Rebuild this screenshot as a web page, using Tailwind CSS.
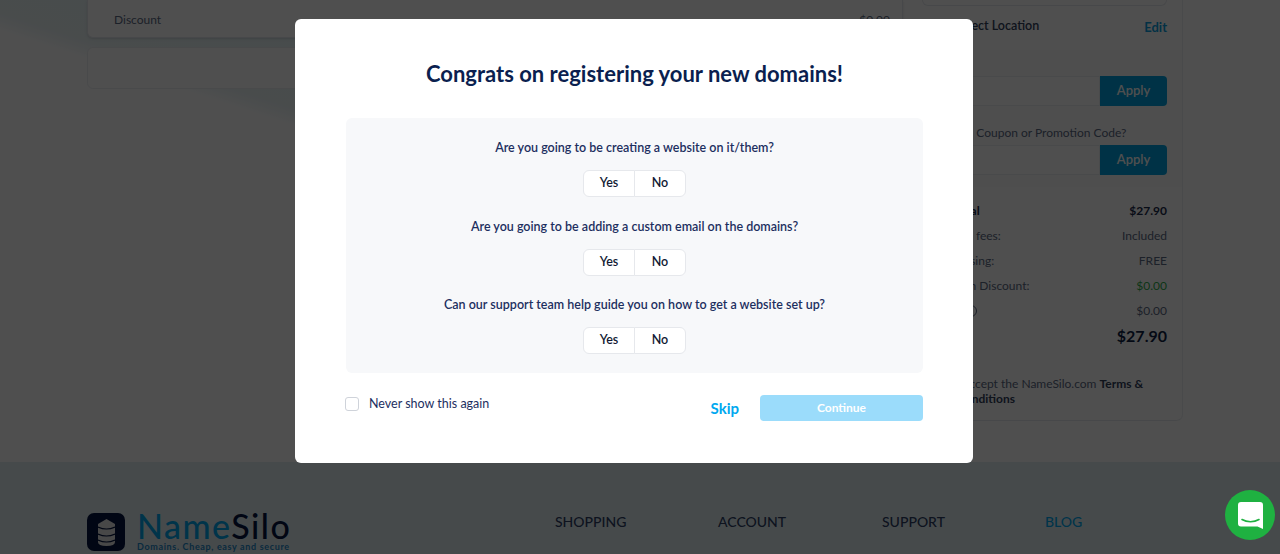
<!DOCTYPE html>
<html lang="en">

<head>
 <meta charset="UTF-8">
 <meta name="viewport" content="width=device-width, initial-scale=1.0">
 <title>NameSilo - Order</title>
 <script src="https://cdn.jsdelivr.net/npm/@tailwindcss/browser@4"></script>
</head>

<body class="relative h-[554px] overflow-hidden bg-white font-['Lato',sans-serif]">

 <!-- page behind the modal -->
 <div class="flex h-[462px] bg-[linear-gradient(198deg,#e6f4f7_0%,#eaf4f6_46%,#ffffff_54%)] bg-[length:295px_140px] bg-no-repeat pl-[87px]">
  <div class="flex w-[816px] flex-col gap-[9px]">
   <div class="flex h-[38px] justify-between rounded-b-md border border-t-0 border-[#e6e9ee] bg-white pl-[26px] pr-[12px] pt-[11px] text-[12px] text-[#5c6a84] shadow-sm">
    <span>Discount</span>
    <span>$0.00</span>
   </div>
   <div class="h-[42px] rounded-md border border-[#eceff3] bg-white"></div>
  </div>

  <div class="ml-[19px] flex h-[421px] w-[261px] flex-col rounded-br-md border-r border-[#eceff3]">
   <div class="mr-[15px] h-[6px] rounded-b-md border border-t-0 border-[#e6e9ee]"></div>
   <div class="flex h-[44px] items-start justify-between pl-[33px] pr-[15px] pt-[11px] text-[#33415c]">
    <span class="text-[12.5px] font-semibold">Select Location</span>
    <span class="mt-[1px] text-[13px] font-bold text-[#0a9fe0]">Edit</span>
   </div>
   <div class="flex h-[137px] flex-col bg-[#fbfbfc] px-[15px] pt-[26px]">
    <div class="flex h-[30px]">
     <div class="flex-1 border border-[#eceff3] bg-white"></div>
     <button class="w-[67px] rounded-r bg-[#00a3e0] text-[13px] font-semibold text-white">Apply</button>
    </div>
    <p class="mt-[20px] text-[12px] leading-[14px] text-[#5c6a84]">Have a Coupon or Promotion Code?</p>
    <div class="mt-[5px] flex h-[30px]">
     <div class="flex-1 border border-[#eceff3] bg-white"></div>
     <button class="w-[67px] rounded-r bg-[#00a3e0] text-[13px] font-semibold text-white">Apply</button>
    </div>
   </div>
   <div class="flex flex-1 flex-col rounded-b-md border-b border-[#e6e9ee] pl-[13px] pr-[15px] pt-[12px] text-[12px]">
    <div class="flex h-[24.8px] items-center justify-between font-bold text-[#1b2a4a]"><span>Subtotal</span><span>$27.90</span></div>
    <div class="flex h-[24.8px] items-center justify-between text-[#5c6a84]"><span>ICANN fees:</span><span>Included</span></div>
    <div class="flex h-[24.8px] items-center justify-between text-[#5c6a84]"><span>Processing:</span><span>FREE</span></div>
    <div class="flex h-[24.8px] items-center justify-between text-[#5c6a84]"><span>Domain Discount:</span><span class="text-[#2eae4e]">$0.00</span></div>
    <div class="flex h-[24.8px] items-center justify-between text-[#5c6a84]">
     <span class="flex items-center">Tax<span class="ml-[12px] flex h-[12px] w-[12px] items-center justify-center rounded-full border border-[#5c6a84] text-[8px]">?</span></span>
     <span>$0.00</span>
    </div>
    <div class="flex h-[27px] items-center justify-between text-[16px] font-bold text-[#0f1f45]"><span>Total</span><span>$27.90</span></div>
    <p class="mt-[26px] pl-[22px] text-[12px] leading-[15px] text-[#5c6a84]">I accept the NameSilo.com <b class="text-[#33415c]">Terms &amp; Conditions</b></p>
   </div>
  </div>
 </div>

 <footer class="flex h-[92px] bg-[#e3eff2] pl-[87px]">
  <div class="mt-[51px] flex h-[38px] w-[468px]">
   <div class="flex h-[38px] w-[38px] items-center justify-center rounded-[7px] bg-[#051540]">
    <svg width="17" height="27" viewBox="0 0 17 27">
     <path fill="#e8e8e8" d="M8.5 0 17 5V23Q17 27 8.5 27 0 27 0 23V5Z"/>
     <path fill="none" stroke="#051540" stroke-width="1.2" d="M0 8Q8.5 12 17 8M0 15Q8.5 19 17 15M0 21Q8.5 25 17 21"/>
    </svg>
   </div>
   <div class="ml-[12px] flex flex-col">
    <span class="-mt-[2px] text-[34px] font-medium leading-[30px] tracking-[1.5px] text-[#051540]"><span class="text-[#00a8ef]">Name</span>Silo</span>
    <span class="text-[9px] font-bold leading-[11px] tracking-[.65px] text-[#1f8ac9]">Domains. Cheap, easy and secure</span>
   </div>
  </div>
  <nav class="flex pt-[51px] text-[14px] font-medium leading-[18px] text-[#2d3f66]">
   <a class="w-[163px]">SHOPPING</a>
   <a class="w-[164px]">ACCOUNT</a>
   <a class="w-[163px]">SUPPORT</a>
   <a class="text-[#00a8ef]">BLOG</a>
  </nav>
 </footer>

 <!-- overlay + modal -->
 <div class="absolute inset-0 bg-black/[.69]"></div>
 <div class="absolute left-[295px] top-[19px] flex h-[444px] w-[678px] flex-col rounded-md bg-white pl-[51px] pr-[50px]">
  <h2 class="mt-[40px] text-center text-[22px] font-bold leading-[29px] text-[#0b1f4f]">Congrats on registering your new domains!</h2>
  <div class="mt-[30px] flex h-[255px] flex-col rounded-md bg-[#f7f8fa] pt-[21px] text-center text-[12.5px] font-semibold text-[#1d2f5f]">
   <p class="leading-[18px]">Are you going to be creating a website on it/them?</p>
   <div class="mb-[20.5px] mt-[13px] flex justify-center text-[#111a33]">
    <button class="h-[27px] w-[52px] rounded-l-md border border-[#e6e8ec] bg-white">Yes</button>
    <button class="-ml-px h-[27px] w-[52px] rounded-r-md border border-[#e6e8ec] bg-white">No</button>
   </div>
   <p class="leading-[18px]">Are you going to be adding a custom email on the domains?</p>
   <div class="mb-[20.5px] mt-[13px] flex justify-center text-[#111a33]">
    <button class="h-[27px] w-[52px] rounded-l-md border border-[#e6e8ec] bg-white">Yes</button>
    <button class="-ml-px h-[27px] w-[52px] rounded-r-md border border-[#e6e8ec] bg-white">No</button>
   </div>
   <p class="leading-[18px]">Can our support team help guide you on how to get a website set up?</p>
   <div class="mt-[13px] flex justify-center text-[#111a33]">
    <button class="h-[27px] w-[52px] rounded-l-md border border-[#e6e8ec] bg-white">Yes</button>
    <button class="-ml-px h-[27px] w-[52px] rounded-r-md border border-[#e6e8ec] bg-white">No</button>
   </div>
  </div>
  <div class="mt-[22px] flex items-start">
   <label class="-ml-px mt-[1px] flex items-center text-[12.5px] leading-[14px] text-[#1d2f5f]">
    <span class="h-[14px] w-[14px] rounded-[3px] border border-[#cfd3da] bg-white"></span>
    <span class="ml-[10px] pt-[1px]">Never show this again</span>
   </label>
   <span class="ml-auto mt-[3px] text-[15px] font-bold leading-[20px] text-[#00a8ef]">Skip</span>
   <button class="ml-[21px] h-[26px] w-[163px] rounded bg-[#9bdcfb] text-[12px] font-bold text-white">Continue</button>
  </div>
 </div>

 <!-- chat widget -->
 <div class="absolute left-[1225px] top-[490px] flex h-[50px] w-[50px] items-center justify-center rounded-full bg-[#1fb141]">
  <svg width="25" height="27" viewBox="0 0 25 27">
   <path fill="#fff" d="M3 0H22A3 3 0 0 1 25 3V27L19.5 24.5H3A3 3 0 0 1 0 21.5V3A3 3 0 0 1 3 0Z"/>
   <path fill="none" stroke="#1fb141" stroke-width="1.6" stroke-linecap="round" d="M4 17.5C9 20.5 16 20.5 21 17.5"/>
  </svg>
 </div>
</body>

</html>
